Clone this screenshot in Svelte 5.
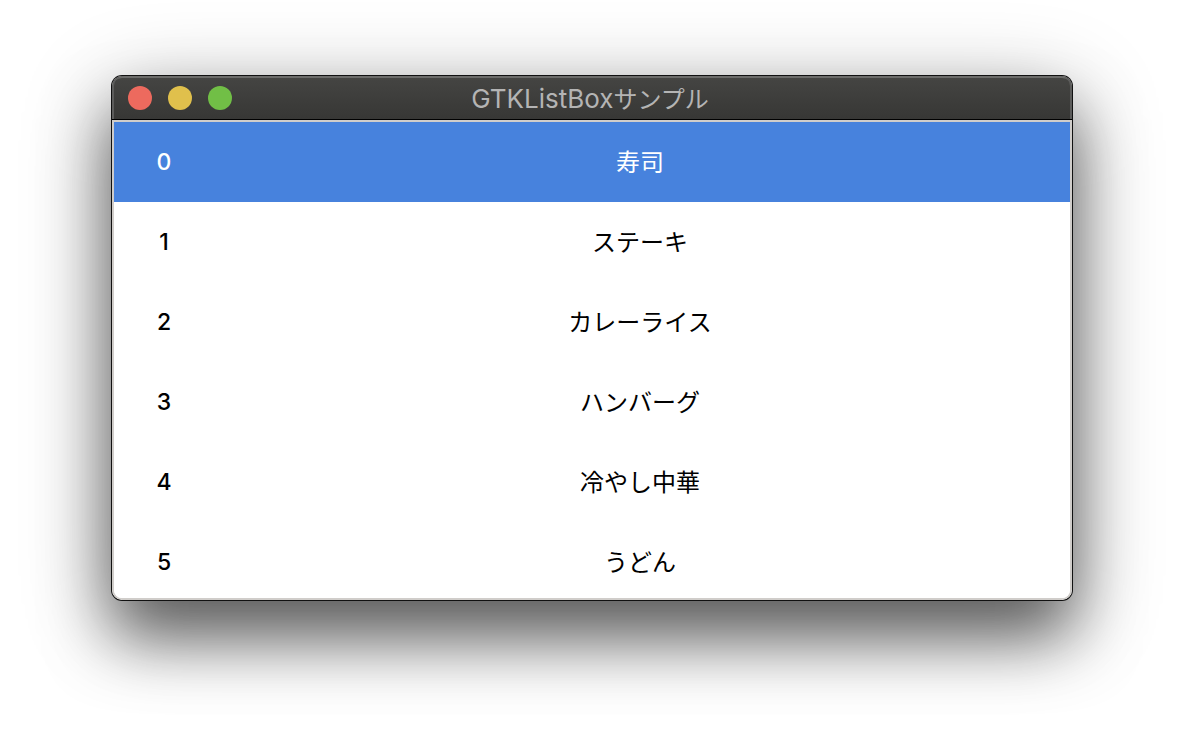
<script>
  const foods = ['寿司', 'ステーキ', 'カレーライス', 'ハンバーグ', '冷やし中華', 'うどん'];
  let selected = $state(0);
</script>

<main>
  <section class="window" aria-label="GTKListBoxサンプル">
    <header>
      <div class="controls">
        <button class="close" aria-label="Close"></button>
        <button class="minimize" aria-label="Minimize"></button>
        <button class="zoom" aria-label="Zoom"></button>
      </div>
      <h1>GTKListBox<span>サンプル</span></h1>
    </header>
    <div class="list" role="listbox" aria-label="GTKListBoxサンプル">
      {#each foods as food, i}
        <button class="row" role="option" class:selected={selected === i} aria-selected={selected === i} onclick={() => (selected = i)}>
          <span class="number">{i}</span>
          <span class="food">{food}</span>
        </button>
      {/each}
    </div>
  </section>
</main>

<style>
  :global(body) { background: #fff; }
  main {
    box-sizing: border-box;
    height: 100vh;
    display: flex;
    padding: 76px 112px 148px;
    overflow: hidden;
    font-family: Inter, "Noto Sans CJK JP", sans-serif;
  }
  .window {
    flex: 1;
    min-width: 0;
    display: flex;
    flex-direction: column;
    border-radius: 10px;
    overflow: hidden;
    background: #fff;
    box-shadow: 0 0 0 1px #111, 0 38px 64px rgb(0 0 0 / 52%), 0 20px 90px rgb(0 0 0 / 32%);
  }
  header {
    box-sizing: border-box;
    flex: none;
    height: 44px;
    display: grid;
    grid-template-columns: 1fr auto 1fr;
    align-items: center;
    padding: 0 20px 0 16px;
    background: linear-gradient(#454543, #373735);
    border-bottom: 1px solid #000;
    border-radius: 10px 10px 0 0;
    box-shadow: inset 2px 0 #5c5c5b, inset -2px 0 #5c5c5b, inset 0 2px #6c6c6a;
  }
  .controls { display: flex; gap: 16px; }
  .controls button { width: 24px; height: 24px; padding: 0; border: 0; border-radius: 50%; }
  .controls .close { background: #ed6a5e; }
  .controls .minimize { background: #e0c04c; }
  .controls .zoom { background: #71bf46; }
  h1 { margin: 0; padding-top: 4px; color: #b4b4b4; font-size: 26px; line-height: 32px; font-weight: 400; }
  h1 span { font-size: 24px; }
  .list {
    flex: 1;
    min-height: 0;
    border: 2px solid #d0cdca;
    border-radius: 0 0 10px 10px;
    overflow: auto;
    scrollbar-width: none;
  }
  .row {
    width: 100%;
    height: 80px;
    display: grid;
    grid-template-columns: 100px 1fr;
    align-items: center;
    padding: 0 4px 0 0;
    border: 0;
    background: #fff;
    color: #000;
    font: inherit;
    font-size: 24px;
    line-height: 32px;
  }
  .row.selected { background: #4782dd; color: #fff; }
  .number { font-size: 23px; font-weight: 500; }
  .food { padding-top: 2px; text-align: center; }
</style>
